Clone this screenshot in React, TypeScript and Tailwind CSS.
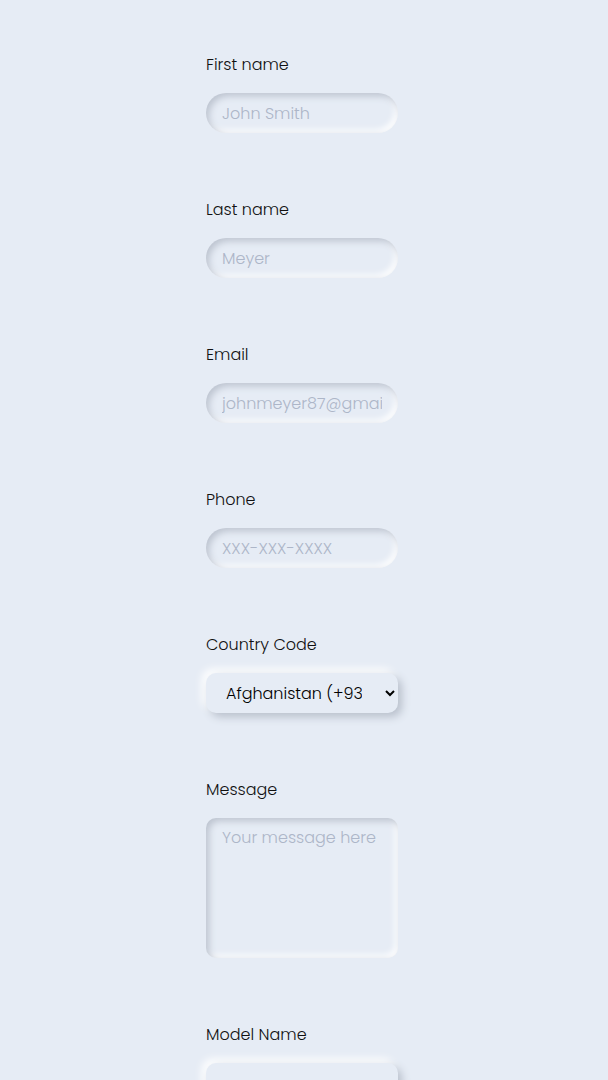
import { useState } from "react";

const inputCls =
  "h-10 w-[192px] rounded-full bg-[#e6ecf5] px-4 text-base font-light text-[#1f2937] placeholder:text-[#adb6c8] outline-none shadow-[inset_3px_3px_7px_#bcc3cf,inset_-3px_-3px_6px_#ffffff]";

function Field({ label, children }: { label: string; children: React.ReactNode }) {
  return (
    <div className="mb-[65px] flex flex-col">
      <label className="mb-4 block h-6 text-base font-light leading-6 text-[#111111]">
        {label}
      </label>
      {children}
    </div>
  );
}

export default function App() {
  const [country, setCountry] = useState("af");

  return (
    <div
      className="min-h-[1080px] w-full bg-[#e6ecf5] pl-[206px] pt-[53px]"
      style={{ fontFamily: "Poppins, Inter, 'Noto Sans', sans-serif" }}
    >
      <Field label="First name">
        <input type="text" placeholder="John Smith" className={inputCls} />
      </Field>
      <Field label="Last name">
        <input type="text" placeholder="Meyer" className={inputCls} />
      </Field>
      <Field label="Email">
        <input type="email" placeholder="johnmeyer87@gmail.com" className={inputCls} />
      </Field>
      <Field label="Phone">
        <input type="tel" placeholder="XXX-XXX-XXXX" className={inputCls} />
      </Field>
      <Field label="Country Code">
        <select
          value={country}
          onChange={(e) => setCountry(e.target.value)}
          className="h-10 w-[192px] rounded-[10px] bg-[#e6ecf5] pl-4 pr-5 text-base font-light text-black outline-none shadow-[4px_4px_8px_#b9c0cc,-4px_-4px_8px_#ffffff]"
        >
          <option value="af">Afghanistan (+93)</option>
          <option value="al">Albania (+355)</option>
          <option value="dz">Algeria (+213)</option>
        </select>
      </Field>
      <Field label="Message">
        <textarea
          placeholder="Your message here"
          className="h-[140px] w-[192px] resize-none rounded-[10px] bg-[#e6ecf5] px-4 py-2 text-base font-light text-[#1f2937] placeholder:text-[#adb6c8] outline-none shadow-[inset_3px_3px_7px_#bcc3cf,inset_-3px_-3px_6px_#ffffff]"
        />
      </Field>
      <Field label="Model Name">
        <div className="h-10 w-[192px] rounded-[10px] bg-[#e6ecf5] shadow-[4px_4px_8px_#b9c0cc,-4px_-4px_8px_#ffffff]" />
      </Field>
    </div>
  );
}
